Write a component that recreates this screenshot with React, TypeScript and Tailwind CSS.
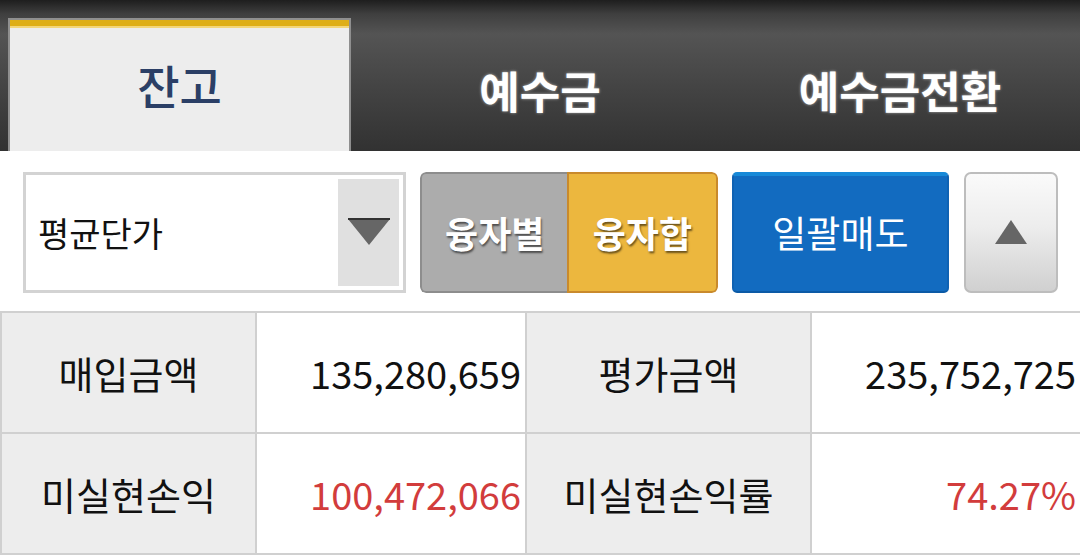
import React from "react";

const font = { fontFamily: '"Noto Sans CJK KR", "Noto Sans", sans-serif' };

function Tabs() {
  return (
    <div className="h-[151px] flex bg-[linear-gradient(to_bottom,#1e1e1e_0px,#3f3f3f_14px,#545454_34px,#434343_90px,#323232_150px)]">
      <div className="w-[360px] flex pt-[18px] pl-[8px] pr-[9px]">
        <div className="flex-1 flex flex-col border-x-2 border-t-2 border-[#8f8f8f] bg-[#ededed]">
          <div className="h-[8px] bg-[#deae17] border-b-2 border-[#f3d67a]" />
          <div className="flex-1 flex items-center justify-center pb-[10px] text-[46px] font-medium text-[#2b3f66]">잔고</div>
        </div>
      </div>
      <div className="w-[360px] flex items-center justify-center pt-[28px] text-[44px] font-bold text-white [text-shadow:0_0_3px_rgba(255,255,255,0.6)]">예수금</div>
      <div className="w-[360px] flex items-center justify-center pt-[28px] text-[44px] font-bold text-white [text-shadow:0_0_3px_rgba(255,255,255,0.6)]">예수금전환</div>
    </div>
  );
}

function Toolbar() {
  return (
    <div className="h-[160px] flex items-center pl-[23px] pr-[22px] pt-[2px]">
      <div className="w-[384px] h-[121px] border-[3px] border-[#d3d3d3] bg-white flex items-center">
        <div className="flex-1 pl-[12px] text-[34px] text-[#111]">평균단가</div>
        <div className="w-[61px] h-[107px] mr-[4px] bg-[#e0e0e0] flex items-center justify-center">
          <svg width="42" height="28" viewBox="0 0 42 28">
            <polygon points="0,1 42,1 21,27" fill="#666" />
            <rect x="0" y="0" width="42" height="2" fill="#333" />
          </svg>
        </div>
      </div>
      <div className="ml-[14px] w-[298px] h-[121px] flex rounded-[6px] overflow-hidden">
        <div className="w-[147px] bg-[#acacac] border-[2px] border-r-0 border-[#8d8d8d] rounded-l-[6px] flex items-center justify-center text-[36px] font-bold text-white [text-shadow:1px_2px_2px_rgba(0,0,0,0.55)]">융자별</div>
        <div className="flex-1 bg-[#ecb73e] border-[2px] border-[#c98a2c] rounded-r-[6px] flex items-center justify-center text-[36px] font-bold text-white [text-shadow:1px_2px_2px_rgba(0,0,0,0.55)]">융자합</div>
      </div>
      <div className="ml-[14px] w-[218px] h-[121px] rounded-[5px] bg-[#126bc0] border-t-[4px] border-x-2 border-b-2 border-t-[#1789d8] border-x-[#0f62b3] border-b-[#0b5aa6] flex items-center justify-center text-[37px] text-white">일괄매도</div>
      <div className="ml-[15px] w-[94px] h-[121px] rounded-[7px] border-2 border-[#bdbdbd] bg-[linear-gradient(to_bottom,#fafafa_0%,#ededed_45%,#d0d0d0_100%)] flex items-center justify-center">
        <svg width="32" height="24" viewBox="0 0 32 24">
          <polygon points="16,0 32,24 0,24" fill="#666" />
        </svg>
      </div>
    </div>
  );
}

function Label({ children }: { children: React.ReactNode }) {
  return (
    <div className="bg-[#ededed] flex items-center justify-center text-[38px] text-[#111] border-r-2 border-b-2 border-[#d0d0d0]">
      {children}
    </div>
  );
}

function Value({ children, red }: { children: React.ReactNode; red?: boolean }) {
  return (
    <div
      className={
        "bg-white flex items-center justify-end pr-[4px] text-[38px] border-r-2 border-b-2 border-[#d0d0d0] " +
        (red ? "text-[#d23c3c]" : "text-[#111]")
      }
    >
      {children}
    </div>
  );
}

function Summary() {
  return (
    <div className="grid grid-cols-[255px_270px_285px_1fr] grid-rows-[121px_121px] border-t-2 border-l-2 border-[#d0d0d0] mr-[-2px]">
      <Label>매입금액</Label>
      <Value>135,280,659</Value>
      <Label>평가금액</Label>
      <Value>235,752,725</Value>
      <Label>미실현손익</Label>
      <Value red>100,472,066</Value>
      <Label>미실현손익률</Label>
      <Value red>74.27%</Value>
    </div>
  );
}

export default function App() {
  return (
    <div className="w-[1080px] h-[560px] overflow-hidden bg-white" style={font}>
      <Tabs />
      <Toolbar />
      <Summary />
    </div>
  );
}
